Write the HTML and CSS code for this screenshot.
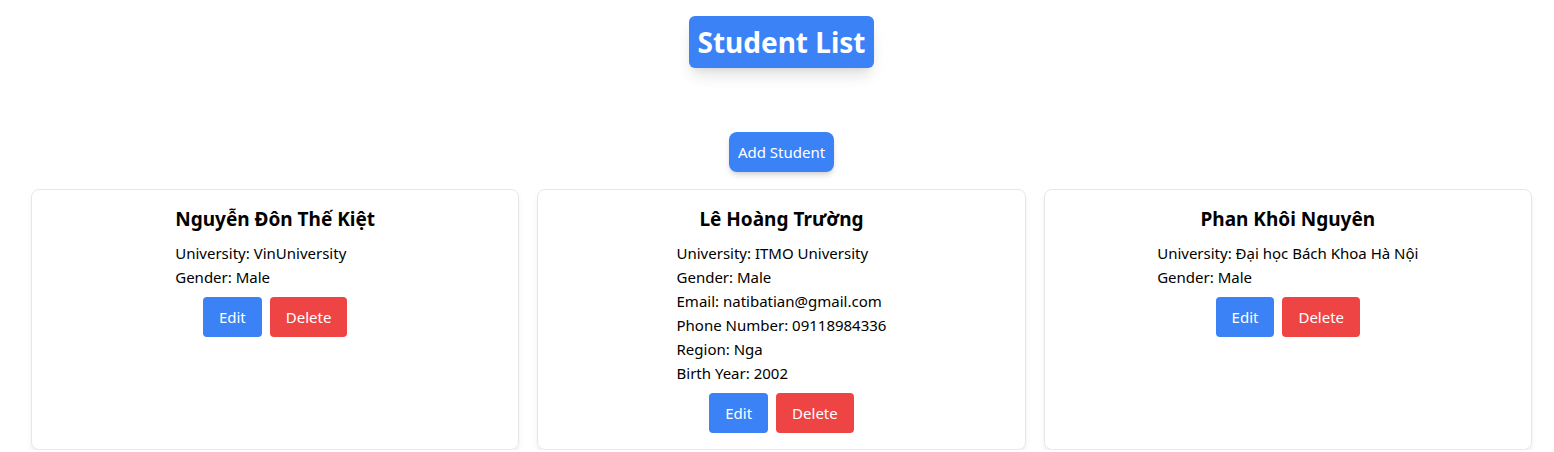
FILE: index.html
```html
<!DOCTYPE html>
<html lang="vi">
<head>
<meta charset="utf-8">
<title>Student List</title>
<link rel="stylesheet" href="styles.css">
</head>
<body>
<div class="page">
  <header class="header">
    <h1 class="title">Student List</h1>
  </header>
  <div class="actions">
    <button class="btn btn-add">Add Student</button>
  </div>
  <div class="grid">
    <div class="card">
      <div class="info">
        <h2 class="name">Nguyễn Đôn Thế Kiệt</h2>
        <p>University: VinUniversity</p>
        <p>Gender: Male</p>
      </div>
      <div class="buttons">
        <button class="btn btn-edit">Edit</button>
        <button class="btn btn-delete">Delete</button>
      </div>
    </div>
    <div class="card">
      <div class="info">
        <h2 class="name">Lê Hoàng Trường</h2>
        <p>University: ITMO University</p>
        <p>Gender: Male</p>
        <p>Email: natibatian@gmail.com</p>
        <p>Phone Number: 09118984336</p>
        <p>Region: Nga</p>
        <p>Birth Year: 2002</p>
      </div>
      <div class="buttons">
        <button class="btn btn-edit">Edit</button>
        <button class="btn btn-delete">Delete</button>
      </div>
    </div>
    <div class="card">
      <div class="info">
        <h2 class="name">Phan Khôi Nguyên</h2>
        <p>University: Đại học Bách Khoa Hà Nội</p>
        <p>Gender: Male</p>
      </div>
      <div class="buttons">
        <button class="btn btn-edit">Edit</button>
        <button class="btn btn-delete">Delete</button>
      </div>
    </div>
  </div>
</div>
</body>
</html>
```

FILE: styles.css
```css
* { box-sizing: border-box; }
html, body { margin: 0; padding: 0; background: #fff; }
body {
  font-family: "Noto Sans", "Open Sans", sans-serif;
  font-size: 15px;
  line-height: 24px;
  color: #000;
}
.page { padding: 16px 22px 0 31px; }
.header { display: flex; justify-content: center; }
.title {
  margin: 0;
  background: #3b82f6;
  color: #fff;
  font-size: 28px;
  line-height: 36px;
  font-weight: 700;
  padding: 8px 8px;
  border-radius: 6px;
  box-shadow: 0 10px 15px -3px rgba(0,0,0,0.12), 0 4px 6px -4px rgba(0,0,0,0.1);
}
.actions { display: flex; justify-content: center; margin-top: 64px; }
.btn {
  font-family: inherit;
  font-size: 15px;
  line-height: 24px;
  color: #fff;
  border: 0;
  border-radius: 4px;
  padding: 8px 16px;
  cursor: pointer;
}
.btn-add {
  background: #3b82f6;
  padding: 8px 9px;
  border-radius: 8px;
  box-shadow: 0 4px 6px -1px rgba(0,0,0,0.15), 0 2px 4px -2px rgba(0,0,0,0.1);
}
.btn-edit { background: #3b82f6; }
.btn-delete { background: #ef4444; }
.grid {
  display: grid;
  grid-template-columns: repeat(3, 1fr);
  gap: 18px;
  margin-top: 17px;
}
.card {
  border: 1px solid #e5e7eb;
  border-radius: 8px;
  padding: 15px;
  display: flex;
  flex-direction: column;
  align-items: center;
  min-height: 261px;
  box-shadow: 0 4px 6px -1px rgba(0,0,0,0.08), 0 2px 4px -2px rgba(0,0,0,0.06);
}
.info { width: fit-content; }
.name {
  margin: 0 0 8px;
  font-size: 19px;
  line-height: 28px;
  font-weight: 700;
  text-align: center;
}
.info p { margin: 0; }
.buttons { display: flex; gap: 8px; margin-top: 8px; }
```
